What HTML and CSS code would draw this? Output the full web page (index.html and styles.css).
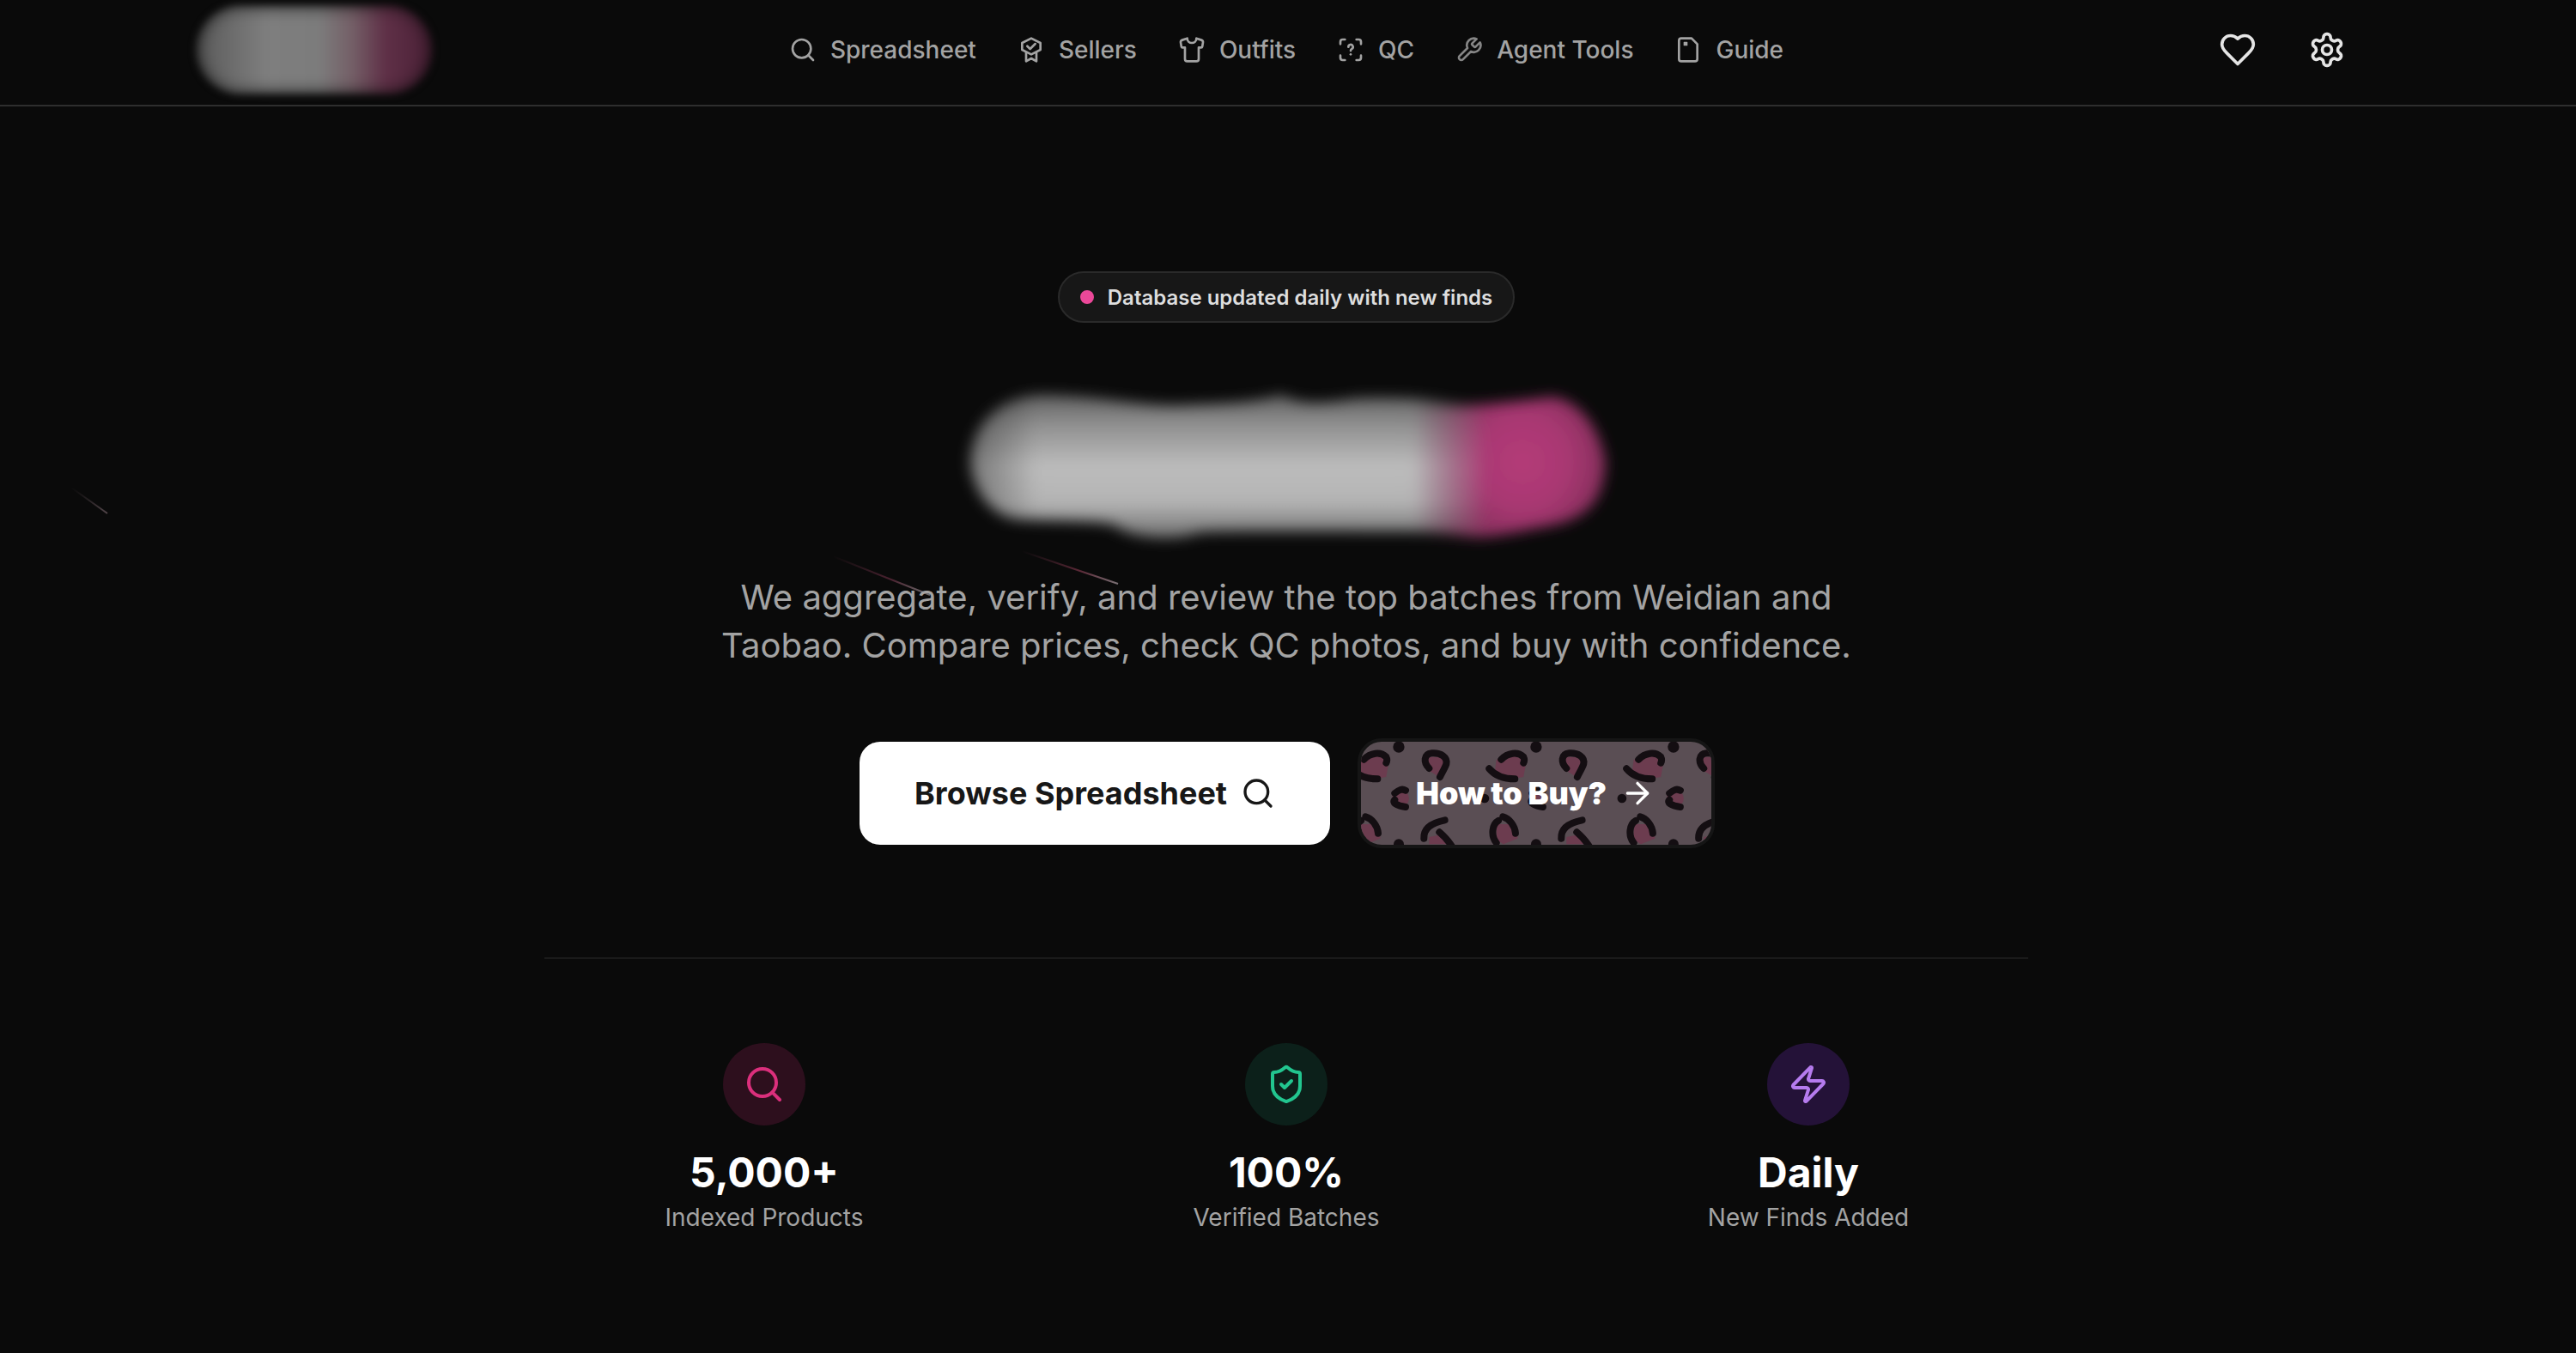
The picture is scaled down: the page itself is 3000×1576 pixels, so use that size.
FILE: index.html
```html
<!DOCTYPE html>
<html lang="en">
<head>
    <meta charset="UTF-8">
    <meta name="viewport" content="width=device-width, initial-scale=1.0">
    <title>Spreadsheet</title>
    <link rel="stylesheet" href="styles.css">
</head>
<body>
    <svg class="streaks" width="3000" height="1576" viewBox="0 0 3000 1576" fill="none">
        <defs>
            <linearGradient id="streak-a" gradientUnits="userSpaceOnUse" x1="83" y1="568" x2="125" y2="598">
                <stop offset="0" stop-color="#3a3034" stop-opacity="0"/>
                <stop offset="1" stop-color="#55484c"/>
            </linearGradient>
            <linearGradient id="streak-b" gradientUnits="userSpaceOnUse" x1="970" y1="648" x2="1083" y2="693">
                <stop offset="0" stop-color="#4a2230" stop-opacity="0"/>
                <stop offset="0.6" stop-color="#4a2230"/>
                <stop offset="1" stop-color="#6e6e6e"/>
            </linearGradient>
            <linearGradient id="streak-c" gradientUnits="userSpaceOnUse" x1="1190" y1="642" x2="1302" y2="680">
                <stop offset="0" stop-color="#4a2230" stop-opacity="0"/>
                <stop offset="0.6" stop-color="#5a2836"/>
                <stop offset="1" stop-color="#7a7074"/>
            </linearGradient>
        </defs>
        <path d="M83 568 125 598" stroke="url(#streak-a)" stroke-width="2"/>
        <path d="M970 648 1083 693" stroke="url(#streak-b)" stroke-width="2"/>
        <path d="M1190 642 1302 680" stroke="url(#streak-c)" stroke-width="2"/>
    </svg>

    <header class="navbar">
        <div class="nav-logo"></div>
        <nav class="nav-links">
            <a class="nav-link" href="#">
                <svg class="icon" viewBox="0 0 24 24"><circle cx="11" cy="11" r="8"/><path d="m21 21-4.3-4.3"/></svg>
                Spreadsheet
            </a>
            <a class="nav-link" href="#">
                <svg class="icon" viewBox="0 0 24 24"><path d="M12 2 20 6v6l-8 4-8-4V6z"/><path d="M7.500 14.500V22l4.500-2.500 4.500 2.500v-7.500"/><path d="m8.500 8.800 2.500 2.500L15.500 6.800"/></svg>
                Sellers
            </a>
            <a class="nav-link" href="#">
                <svg class="icon" viewBox="0 0 24 24"><path d="M20.380 3.460 16 2a4 4 0 0 1-8 0L3.620 3.460a2 2 0 0 0-1.340 2.230l.58 3.470a1 1 0 0 0 .99.84H6v10c0 1.100.9 2 2 2h8a2 2 0 0 0 2-2V10h2.150a1 1 0 0 0 .99-.84l.58-3.470a2 2 0 0 0-1.340-2.230z"/></svg>
                Outfits
            </a>
            <a class="nav-link" href="#">
                <svg class="icon" viewBox="0 0 24 24"><path d="M3 7V5a2 2 0 0 1 2-2h2"/><path d="M17 3h2a2 2 0 0 1 2 2v2"/><path d="M21 17v2a2 2 0 0 1-2 2h-2"/><path d="M7 21H5a2 2 0 0 1-2-2v-2"/><path d="M10 9.500a2 2 0 1 1 3 1.700c-.7.4-1 .8-1 1.600"/><path d="M12 16h.01"/></svg>
                QC
            </a>
            <a class="nav-link" href="#">
                <svg class="icon icon-dim" viewBox="0 0 24 24"><path d="M14.700 6.300a1 1 0 0 0 0 1.400l1.600 1.600a1 1 0 0 0 1.400 0l3.770-3.770a6 6 0 0 1-7.940 7.940l-6.910 6.910a2.120 2.120 0 0 1-3-3l6.910-6.910a6 6 0 0 1 7.940-7.940l-3.760 3.760z"/></svg>
                Agent Tools
            </a>
            <a class="nav-link" href="#">
                <svg class="icon" viewBox="0 0 24 24"><path d="M6 2h9l5 5v13a2 2 0 0 1-2 2H6a2 2 0 0 1-2-2V4a2 2 0 0 1 2-2z"/><path class="file-mark" d="M8.500 5.500h2.500V8H8.500z"/></svg>
                Guide
            </a>
        </nav>
        <div class="nav-actions">
            <a class="action-btn" href="#">
                <svg class="icon" viewBox="0 0 24 24"><path d="M19 14c1.490-1.460 3-3.210 3-5.500A5.500 5.500 0 0 0 16.500 3c-1.760 0-3 .5-4.500 2-1.500-1.500-2.740-2-4.500-2A5.500 5.500 0 0 0 2 8.500c0 2.300 1.500 4.050 3 5.500l7 7Z"/></svg>
            </a>
            <a class="action-btn" href="#">
                <svg class="icon" viewBox="0 0 24 24"><path d="M12.220 2h-.44a2 2 0 0 0-2 2v.18a2 2 0 0 1-1 1.730l-.43.25a2 2 0 0 1-2 0l-.15-.08a2 2 0 0 0-2.730.73l-.22.38a2 2 0 0 0 .73 2.730l.15.1a2 2 0 0 1 1 1.720v.51a2 2 0 0 1-1 1.740l-.15.09a2 2 0 0 0-.73 2.730l.22.38a2 2 0 0 0 2.730.73l.15-.08a2 2 0 0 1 2 0l.43.25a2 2 0 0 1 1 1.730V20a2 2 0 0 0 2 2h.44a2 2 0 0 0 2-2v-.18a2 2 0 0 1 1-1.730l.43-.25a2 2 0 0 1 2 0l.15.08a2 2 0 0 0 2.730-.73l.22-.39a2 2 0 0 0-.73-2.730l-.15-.08a2 2 0 0 1-1-1.740v-.5a2 2 0 0 1 1-1.740l.15-.09a2 2 0 0 0 .73-2.730l-.22-.38a2 2 0 0 0-2.730-.73l-.15.08a2 2 0 0 1-2 0l-.43-.25a2 2 0 0 1-1-1.730V4a2 2 0 0 0-2-2z"/><circle cx="12" cy="12" r="3"/></svg>
            </a>
        </div>
    </header>

    <main class="hero">
        <div class="badge"><span class="badge-dot"></span>Database updated daily with new finds</div>

        <svg class="hero-logo" viewBox="0 0 780 210">
            <defs>
                <filter id="soft" x="-10%" y="-20%" width="120%" height="140%"><feGaussianBlur stdDeviation="8"/></filter>
                <linearGradient id="logo-grey" x1="0" y1="0" x2="0" y2="1">
                    <stop offset="0" stop-color="#5e5e5e"/>
                    <stop offset="0.2" stop-color="#8e8e8e"/>
                    <stop offset="0.5" stop-color="#bcbcbc"/>
                    <stop offset="0.75" stop-color="#b4b4b4"/>
                    <stop offset="1" stop-color="#6c6c6c"/>
                </linearGradient>
                <radialGradient id="logo-pink" gradientUnits="userSpaceOnUse" cx="665" cy="98" r="120">
                    <stop offset="0" stop-color="#b43b78"/>
                    <stop offset="0.45" stop-color="#a83872"/>
                    <stop offset="1" stop-color="#72294f"/>
                </radialGradient>
                <linearGradient id="logo-fade" gradientUnits="userSpaceOnUse" x1="0" y1="0" x2="625" y2="0">
                    <stop offset="0" stop-color="#808080"/>
                    <stop offset="0.16" stop-color="#fff"/>
                    <stop offset="0.86" stop-color="#fff"/>
                    <stop offset="1" stop-color="#000"/>
                </linearGradient>
                <mask id="grey-mask" maskUnits="userSpaceOnUse" x="0" y="0" width="780" height="210"><rect width="780" height="210" fill="url(#logo-fade)"/></mask>
            </defs>
            <g filter="url(#soft)">
                <path fill="url(#logo-pink)" d="M520 34C610 34 660 28 700 22 735 28 755 60 762 98 760 140 745 162 700 172 665 178 640 185 612 186 590 184 570 180 520 178Z"/>
                <path mask="url(#grey-mask)" fill="url(#logo-grey)" d="M22 98C24 50 60 22 103 20 170 20 220 34 269 32 310 30 350 30 384 20 405 30 424 32 470 24 515 22 570 24 620 36V180C520 180 350 178 290 180 265 190 215 190 190 172 170 165 110 168 76 165 45 160 24 130 22 98Z"/>
            </g>
        </svg>

        <p class="hero-text">We aggregate, verify, and review the top batches from Weidian and<br>Taobao. Compare prices, check QC photos, and buy with confidence.</p>

        <div class="hero-actions">
            <a class="btn btn-white" href="#">
                Browse Spreadsheet
                <svg class="icon btn-icon" viewBox="0 0 24 24"><circle cx="11" cy="11" r="8"/><path d="m21 21-4.3-4.3"/></svg>
            </a>
            <a class="btn btn-leopard" href="#">
                <svg class="leopard" viewBox="72 42 1224 360">
                    <defs>
                        <g id="spot-tile">
                            <g class="spot-fill">
                                <path d="M545 105 600 85 650 110 640 165 580 175 540 145z"/>
                                <path d="M780 95 850 95 850 135 825 165 785 140z"/>
                                <circle cx="690" cy="240" r="30"/>
                                <path d="M545 330 610 330 620 380 570 400 545 385z"/>
                                <path d="M790 375 840 365 865 400 790 400z"/>
                            </g>
                            <g class="spot-line">
                                <path d="M562 104C585 80 620 75 640 95 645 105 642 112 640 116"/>
                                <path d="M520 136C540 160 570 172 610 172"/>
                                <path d="M790 135C770 115 770 85 800 82 830 80 855 95 850 120 845 135 835 150 828 165"/>
                                <path d="M670 245C660 255 675 265 708 270"/>
                                <path d="M670 222C685 210 695 205 708 212"/>
                                <path d="M545 395C525 370 530 330 552 318"/>
                                <path d="M568 304C590 310 610 335 612 362"/>
                                <path d="M772 380C770 345 800 325 845 316"/>
                                <path d="M826 358C840 370 855 385 868 405"/>
                            </g>
                            <circle class="spot-dot" cx="684" cy="60" r="20"/>
                            <circle class="spot-dot" cx="504" cy="240" r="16"/>
                            <circle class="spot-dot" cx="684" cy="400" r="18"/>
                        </g>
                    </defs>
                    <use href="#spot-tile" x="-480"/>
                    <use href="#spot-tile"/>
                    <use href="#spot-tile" x="480"/>
                </svg>
                <span class="btn-label">How to Buy?</span>
                <svg class="icon btn-icon btn-label" viewBox="0 0 24 24"><path d="M5 12h14"/><path d="m12 5 7 7-7 7"/></svg>
            </a>
        </div>

        <div class="stats">
            <div class="stat">
                <div class="stat-icon stat-pink">
                    <svg class="icon" viewBox="0 0 24 24"><circle cx="11" cy="11" r="8"/><path d="m21 21-4.3-4.3"/></svg>
                </div>
                <div class="stat-value">5,000+</div>
                <div class="stat-label">Indexed Products</div>
            </div>
            <div class="stat">
                <div class="stat-icon stat-green">
                    <svg class="icon" viewBox="0 0 24 24"><path d="M20 13c0 5-3.500 7.500-7.660 8.950a1 1 0 0 1-.67-.01C7.500 20.500 4 18 4 13V6a1 1 0 0 1 1-1c2 0 4.500-1.200 6.240-2.720a1.170 1.170 0 0 1 1.520 0C14.510 3.810 17 5 19 5a1 1 0 0 1 1 1z"/><path d="m9 12 2 2 4-4"/></svg>
                </div>
                <div class="stat-value">100%</div>
                <div class="stat-label">Verified Batches</div>
            </div>
            <div class="stat">
                <div class="stat-icon stat-purple">
                    <svg class="icon" viewBox="0 0 24 24"><path d="M4 14a1 1 0 0 1-.78-1.630l9.900-10.200a.5.5 0 0 1 .86.46l-1.920 6.020A1 1 0 0 0 13 10h7a1 1 0 0 1 .78 1.630l-9.900 10.200a.5.5 0 0 1-.86-.46l1.920-6.020A1 1 0 0 0 11 14z"/></svg>
                </div>
                <div class="stat-value">Daily</div>
                <div class="stat-label">New Finds Added</div>
            </div>
        </div>
    </main>
</body>
</html>
```
FILE: styles.css
```css
* {
    margin: 0;
    padding: 0;
    box-sizing: border-box;
}

html, body {
    height: 100%;
}

body {
    background: #0a0a0a;
    font-family: 'Inter', 'Liberation Sans', sans-serif;
    color: #fff;
    overflow: hidden;
    padding-right: 4px;
}

a {
    color: inherit;
    text-decoration: none;
}

.icon {
    fill: none;
    stroke: currentColor;
    stroke-width: 2;
    stroke-linecap: round;
    stroke-linejoin: round;
    flex-shrink: 0;
}

/* shooting streaks behind the hero */
.streaks {
    position: absolute;
    top: 0;
    left: 0;
    pointer-events: none;
}

/* navbar */
.navbar {
    position: relative;
    height: 124px;
    margin-right: -4px;
    padding: 0 232px 6px 228px;
    display: grid;
    grid-template-columns: 1fr auto 1fr;
    align-items: center;
    border-bottom: 2px solid #2e2e2e;
}

.nav-logo {
    width: 276px;
    height: 104px;
    border-radius: 52px;
    background: linear-gradient(90deg, #5a5a5a 0%, #7e7e7e 30%, #7c7c7c 52%, #745f67 66%, #5f3047 80%, #4a2036 100%);
    box-shadow: inset 0 0 18px #0a0a0a;
    filter: blur(4px);
}

.nav-links {
    display: flex;
    gap: 48px;
}

.nav-link {
    display: flex;
    align-items: center;
    gap: 16px;
    font-size: 28px;
    font-weight: 500;
    color: #a3a3a3;
}

.nav-link .icon {
    width: 32px;
    height: 32px;
}

.nav-link .icon-dim {
    color: #858585;
}

.file-mark {
    fill: currentColor;
    stroke-width: 1;
}

.nav-actions {
    display: flex;
    justify-content: flex-end;
    gap: 60px;
    margin-right: 36px;
}

.action-btn {
    display: flex;
    color: #e5e5e5;
}

.action-btn .icon {
    width: 44px;
    height: 44px;
}

/* hero */
.hero {
    position: relative;
    display: flex;
    flex-direction: column;
    align-items: center;
    padding-top: 192px;
}

.badge {
    height: 60px;
    padding: 0 24px;
    display: flex;
    align-items: center;
    gap: 16px;
    border: 2px solid #2a2a2a;
    border-radius: 30px;
    background: #171717;
    color: #dedede;
    font-size: 24px;
    font-weight: 600;
}

.badge-dot {
    width: 16px;
    height: 16px;
    border-radius: 50%;
    background: #ec4899;
}

.hero-logo {
    width: 780px;
    height: 210px;
    margin-top: 64px;
}

.hero-text {
    margin-top: 18px;
    font-size: 40px;
    line-height: 56px;
    text-align: center;
    color: #a3a3a3;
}

.hero-actions {
    margin-top: 80px;
    margin-left: 2px;
    display: flex;
    align-items: center;
    gap: 32px;
}

.btn {
    height: 120px;
    padding: 0 64px;
    display: flex;
    align-items: center;
    gap: 16px;
    border-radius: 24px;
    font-size: 36px;
    font-weight: 700;
}

.btn-white {
    background: #fff;
    color: #171717;
}

.btn-icon {
    width: 40px;
    height: 40px;
}

.btn-leopard {
    position: relative;
    height: 128px;
    padding-right: 66px;
    border: 4px solid #151515;
    border-radius: 28px;
    overflow: hidden;
    background: #5a4e54;
    color: #fff;
    font-weight: 900;
    letter-spacing: -0.15px;
}

.leopard {
    position: absolute;
    top: 0;
    left: 0;
    width: 100%;
    height: 100%;
}

.btn-label {
    position: relative;
}

.spot-fill {
    fill: #6c3c4f;
}

.spot-line {
    fill: none;
    stroke: #140e12;
    stroke-width: 24;
    stroke-linecap: round;
}

.spot-dot {
    fill: #140e12;
}

/* stats */
.stats {
    margin-top: 127px;
    width: 1728px;
    padding-top: 98px;
    border-top: 2px solid #1a1a1a;
    display: grid;
    grid-template-columns: repeat(3, 1fr);
    gap: 96px;
}

.stat {
    display: flex;
    flex-direction: column;
    align-items: center;
}

.stat-icon {
    width: 96px;
    height: 96px;
    border-radius: 50%;
    display: flex;
    align-items: center;
    justify-content: center;
}

.stat-icon .icon {
    width: 48px;
    height: 48px;
}

.stat-pink {
    background: #2d0f1d;
    color: #db2f7c;
}

.stat-green {
    background: #0c201a;
    color: #22c58f;
}

.stat-purple {
    background: #241238;
    color: #b57bee;
}

.stat-value {
    margin-top: 27px;
    font-size: 48px;
    line-height: 56px;
    font-weight: 700;
}

.stat-label {
    margin-top: 4px;
    font-size: 28px;
    line-height: 40px;
    color: #a3a3a3;
}
```
